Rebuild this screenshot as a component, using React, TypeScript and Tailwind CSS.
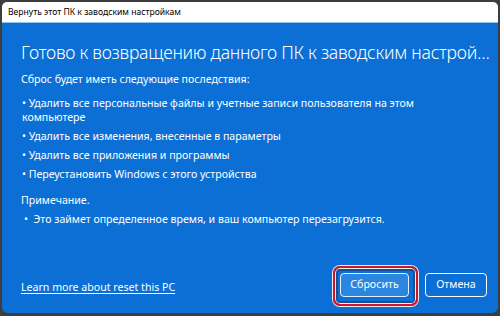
const bullets = [
  "Удалить все персональные файлы и учетные записи пользователя на этом компьютере",
  "Удалить все изменения, внесенные в параметры",
  "Удалить все приложения и программы",
  "Переустановить Windows с этого устройства",
];

export default function App() {
  return (
    <div className="w-[500px] h-[316px] bg-[#3d3d3d] pt-[2px] px-[2px] pb-[3px] overflow-hidden">
      <div
        className="h-full flex flex-col rounded-t-[5px] rounded-b-[6px] overflow-hidden"
        style={{ fontFamily: '"Noto Sans", "Open Sans", sans-serif' }}
      >
        {/* title bar */}
        <div className="h-[20px] bg-white flex items-center pl-[6px] text-[8.6px] text-black">
          Вернуть этот ПК к заводским настройкам
        </div>
        <div className="h-px bg-[#8fc3f0]" />

        {/* content */}
        <div className="flex-1 bg-[#0b6fd6] text-white pl-[19px] pr-[11px] pt-[16px] pb-[16px] flex flex-col text-[10.6px]">
          <h1 className="text-[17.6px] font-light leading-[26px] truncate tracking-[-0.25px] -mr-[3px]">
            Готово к возвращению данного ПК к заводским настройкам
          </h1>

          <p className="mt-[7px] leading-[14px]">Сброс будет иметь следующие последствия:</p>
          <div className="mt-[10px] flex flex-col gap-[5px] w-[420px]">
            {bullets.map((b) => (
              <p key={b} className="leading-[14px] pl-[1px]">
                {"•\u00a0" + b}
              </p>
            ))}
          </div>

          <p className="mt-[12px] leading-[14px]">Примечание.</p>
          <p className="mt-[5px] leading-[14px] pl-[3px]">
            {"•\u00a0\u00a0Это займет определенное время, и ваш компьютер перезагрузится."}
          </p>

          <div className="mt-auto flex items-center justify-between">
            <a className="underline underline-offset-2 text-white mt-[5px]">Learn more about reset this PC</a>
            <div className="flex items-center gap-[16px]">
              <div className="relative">
                <div className="absolute -left-[7px] -right-[9px] -top-[7px] -bottom-[9px] rounded-[7px] border-[2px] border-[#d0142c] shadow-[0_0_0_1px_#eeeeee,inset_0_0_0_1px_#eeeeee,inset_0_0_0_3px_#1b4f8f]" />
                <button className="relative w-[69px] h-[24px] rounded-[4px] border border-[#e6f0fb] bg-[#2a86e0] text-white">
                  Сбросить
                </button>
              </div>
              <button className="w-[62px] h-[24px] rounded-[4px] border border-white text-white">
                Отмена
              </button>
            </div>
          </div>
        </div>
      </div>
    </div>
  );
}
